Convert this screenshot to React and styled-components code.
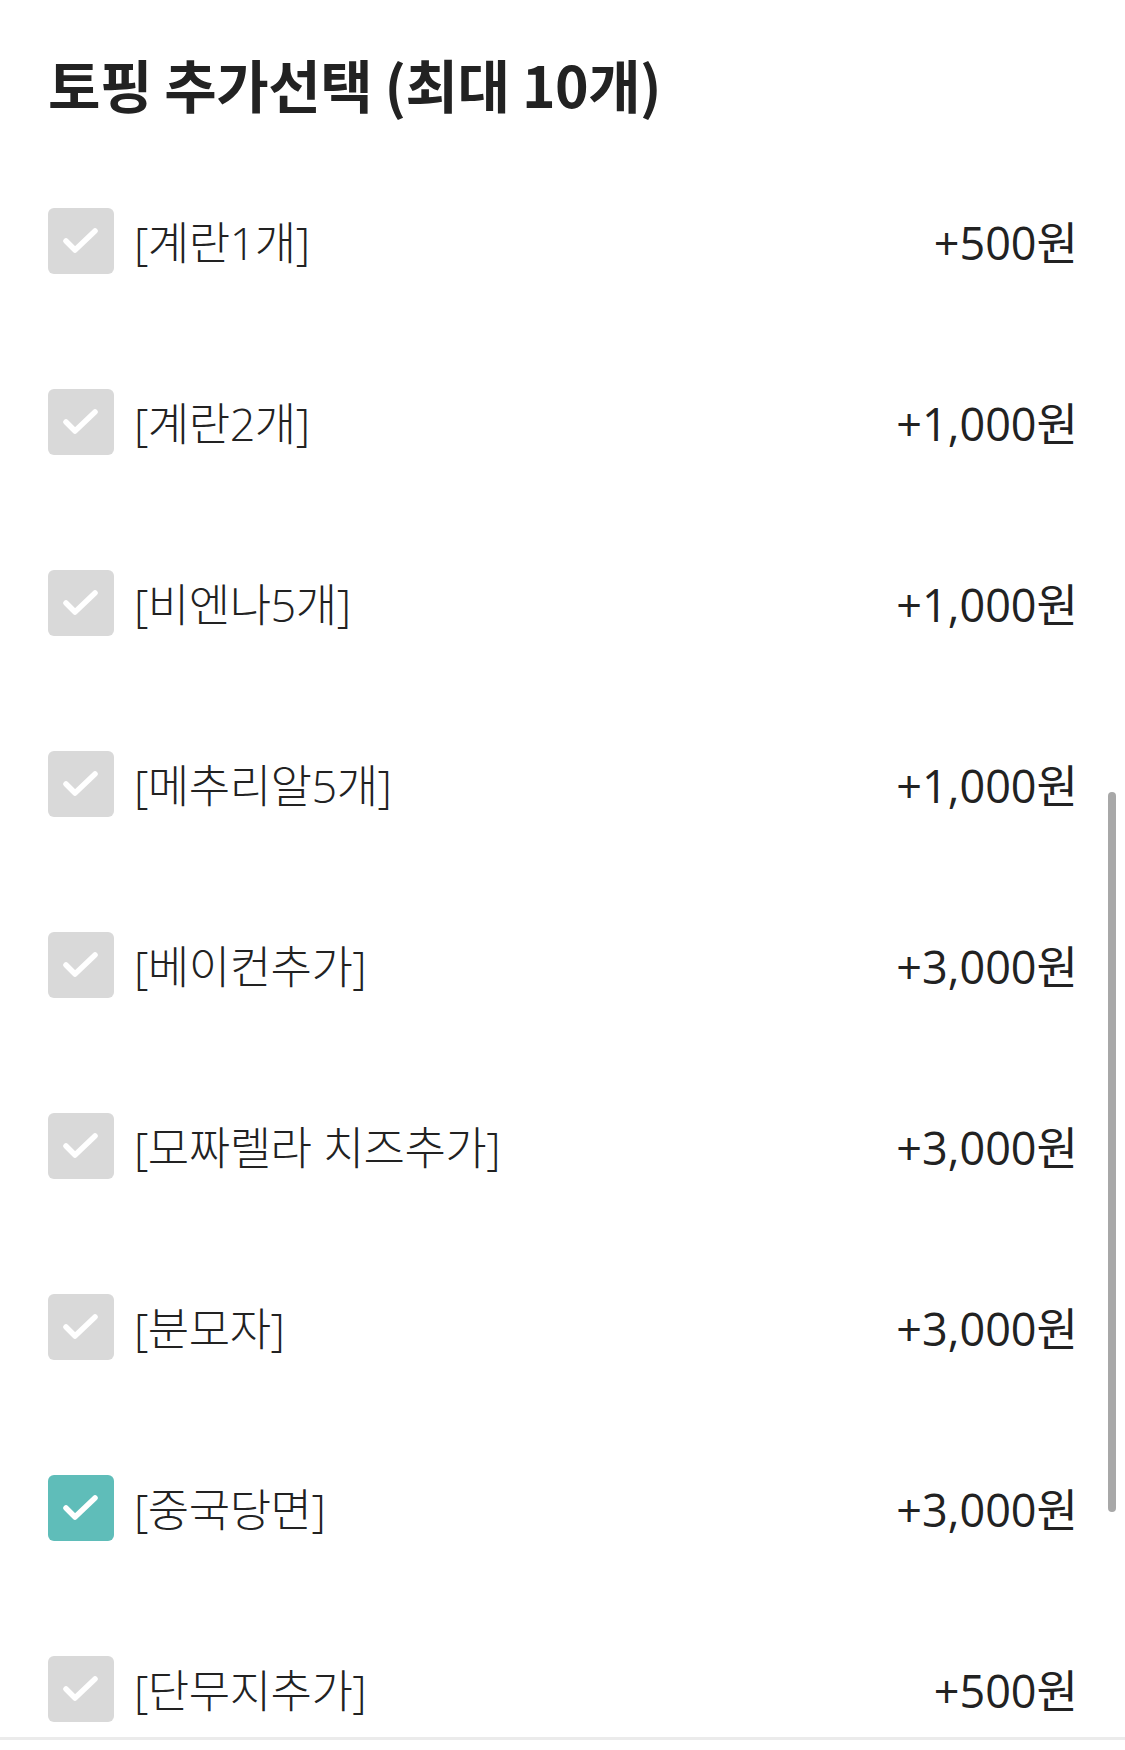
import React from "react";
import styled, { createGlobalStyle } from "styled-components";

const GlobalStyle = createGlobalStyle`
  html, body {
    margin: 0;
    padding: 0;
    background: #ffffff;
  }
  body {
    font-family: "Noto Sans CJK KR", "Noto Sans", sans-serif;
    color: #222222;
  }
`;

const toppings = [
  { name: "[계란1개]", price: "+500원" },
  { name: "[계란2개]", price: "+1,000원" },
  { name: "[비엔나5개]", price: "+1,000원" },
  { name: "[메추리알5개]", price: "+1,000원" },
  { name: "[베이컨추가]", price: "+3,000원" },
  { name: "[모짜렐라 치즈추가]", price: "+3,000원" },
  { name: "[분모자]", price: "+3,000원" },
  { name: "[중국당면]", price: "+3,000원", checked: true },
  { name: "[단무지추가]", price: "+500원" },
];

const Screen = styled.div`
  position: relative;
  width: 1125px;
  height: 1750px;
  overflow: hidden;
  background: #ffffff;
`;

const Section = styled.section`
  height: 1740px;
  padding: 0 48px;
  box-sizing: border-box;
  display: flex;
  flex-direction: column;
  overflow: hidden;
  border-bottom: 3px solid #ebebeb;
`;

const Title = styled.h2`
  flex-shrink: 0;
  margin: 0;
  height: 150px;
  display: flex;
  align-items: center;
  padding-top: 16px;
  box-sizing: border-box;
  font-size: 57px;
  font-weight: 700;
  letter-spacing: -0.5px;
  color: #222222;
`;

const List = styled.ul`
  flex-shrink: 0;
  list-style: none;
  margin: 0;
  padding: 0;
`;

const Row = styled.li`
  height: 181px;
  display: flex;
  align-items: center;
  justify-content: space-between;
`;

const Left = styled.label`
  display: flex;
  align-items: center;
  gap: 20px;
`;

const Box = styled.span`
  flex-shrink: 0;
  width: 66px;
  height: 66px;
  border-radius: 6px;
  background: ${(p) => (p.checked ? "#5fbdb9" : "#d9d9d9")};
  display: flex;
`;

const Name = styled.span`
  font-family: "Open Sans", "Noto Sans CJK KR", sans-serif;
  font-size: 45px;
  font-weight: 300;
  color: #222222;
  letter-spacing: -0.5px;
`;

const Price = styled.span`
  font-family: "Open Sans", "Noto Sans CJK KR", sans-serif;
  font-size: 45px;
  font-weight: 400;
  color: #222222;
  margin-right: -1px;
`;

const ScrollThumb = styled.div`
  position: absolute;
  right: 9px;
  top: 792px;
  width: 8px;
  height: 720px;
  border-radius: 4px;
  background: #a8a8a8;
`;

const Check = () => (
  <svg width="66" height="66" viewBox="0 0 66 66">
    <path
      d="M18 33 L27 42 L47 23"
      fill="none"
      stroke="#ffffff"
      strokeWidth="5.5"
      strokeLinecap="round"
      strokeLinejoin="round"
    />
  </svg>
);

export default function App() {
  return (
    <Screen>
      <GlobalStyle />
      <Section>
        <Title>토핑 추가선택 (최대 10개)</Title>
        <List>
          {toppings.map((t) => (
            <Row key={t.name}>
              <Left>
                <Box checked={t.checked}>
                  <Check />
                </Box>
                <Name>{t.name}</Name>
              </Left>
              <Price>{t.price}</Price>
            </Row>
          ))}
        </List>
      </Section>
      <ScrollThumb />
    </Screen>
  );
}
